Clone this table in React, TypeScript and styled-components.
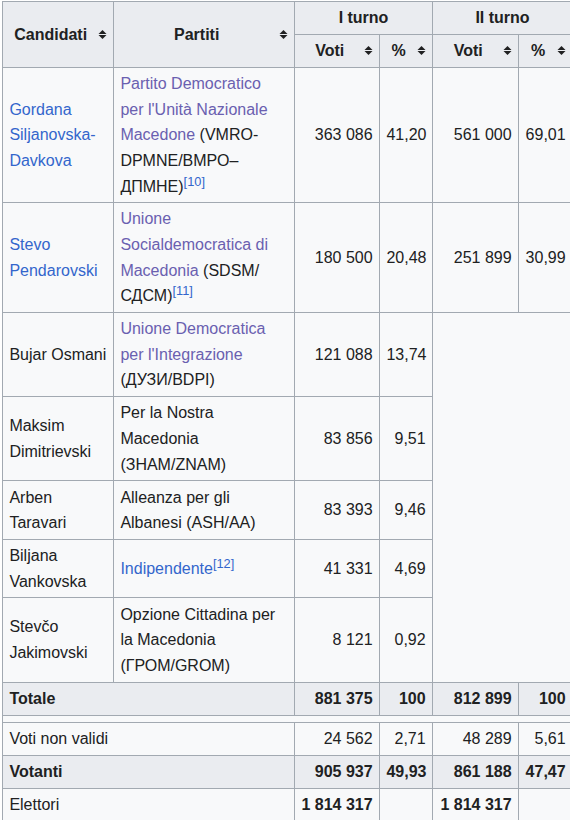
import React from "react";
import styled, { createGlobalStyle } from "styled-components";

const GlobalStyle = createGlobalStyle`
  html, body {
    margin: 0;
    padding: 0;
    overflow: hidden;
    background: #ffffff;
  }
  body {
    font-family: "Liberation Sans", Arial, sans-serif;
    font-size: 16px;
    color: #202122;
  }
`;

const Table = styled.table`
  border-collapse: collapse;
  table-layout: fixed;
  width: 570px;
  margin: 1px 0 0 2px;
  background: #f8f9fa;
  color: #202122;
  border: 1px solid #a2a9b1;
  line-height: 1.6;
  font-size: 16px;
`;

const Th = styled.th<{ $sortable?: boolean }>`
  background: #eaecf0;
  border: 1px solid #a2a9b1;
  padding: 0.2em ${(p) => (p.$sortable ? "0" : "0.4em")} 0.2em 0.4em;
  text-align: center;
  font-weight: bold;
`;

const HeadInner = styled.div`
  display: flex;
  align-items: center;
`;

const HeadText = styled.span`
  flex: 1;
  text-align: center;
`;

const Td = styled.td<{ $num?: boolean; $bold?: boolean; $head?: boolean }>`
  border: 1px solid #a2a9b1;
  padding: 0.2em 0.4em;
  text-align: ${(p) => (p.$num ? "right" : "left")};
  font-weight: ${(p) => (p.$bold || p.$head ? "bold" : "normal")};
  background: ${(p) => (p.$head ? "#eaecf0" : "transparent")};
`;

const SpacerCell = styled.td`
  border: 1px solid #a2a9b1;
  padding: 3.2px 6.4px;
  height: 0;
  line-height: 0;
  font-size: 0;
`;

const Link = styled.span<{ $visited?: boolean }>`
  color: ${(p) => (p.$visited ? "#6a60b0" : "#3366cc")};
`;

const Ref = styled.sup`
  font-size: 80%;
  line-height: 1;
  color: #3366cc;
`;

const SortSvg = styled.svg`
  flex: none;
  width: 21px;
  height: 9px;
`;

const SortIcon = () => (
  <SortSvg viewBox="0 0 21 9" aria-hidden="true">
    <path fill="#202122" d="m14.5 5-4 4-4-4zm0-1-4-4-4 4z" />
  </SortSvg>
);

const SortTh: React.FC<{ children: React.ReactNode; rowSpan?: number }> = ({ children, rowSpan }) => (
  <Th $sortable rowSpan={rowSpan}>
    <HeadInner>
      <HeadText>{children}</HeadText>
      <SortIcon />
    </HeadInner>
  </Th>
);

type Row = {
  name: React.ReactNode;
  party: React.ReactNode;
  v1: string;
  p1: string;
  v2?: string;
  p2?: string;
};

const rows: Row[] = [
  {
    name: <Link>Gordana Siljanovska-Davkova</Link>,
    party: (
      <>
        <Link $visited>Partito Democratico per l'Unità Nazionale Macedone</Link> (VMRO-DPMNE/ВМРО–ДПМНЕ)
        <Ref>[10]</Ref>
      </>
    ),
    v1: "363\u00a0086",
    p1: "41,20",
    v2: "561\u00a0000",
    p2: "69,01",
  },
  {
    name: <Link>Stevo Pendarovski</Link>,
    party: (
      <>
        <Link $visited>Unione Socialdemocratica di Macedonia</Link> (SDSM/СДСМ)
        <Ref>[11]</Ref>
      </>
    ),
    v1: "180\u00a0500",
    p1: "20,48",
    v2: "251\u00a0899",
    p2: "30,99",
  },
  {
    name: "Bujar Osmani",
    party: (
      <>
        <Link $visited>Unione Democratica per l'Integrazione</Link> (ДУЗИ/BDPI)
      </>
    ),
    v1: "121\u00a0088",
    p1: "13,74",
  },
  {
    name: "Maksim Dimitrievski",
    party: "Per la Nostra Macedonia (ЗНАМ/ZNAM)",
    v1: "83\u00a0856",
    p1: "9,51",
  },
  {
    name: "Arben Taravari",
    party: "Alleanza per gli Albanesi (ASH/AA)",
    v1: "83\u00a0393",
    p1: "9,46",
  },
  {
    name: "Biljana Vankovska",
    party: (
      <>
        <Link>Indipendente</Link>
        <Ref>[12]</Ref>
      </>
    ),
    v1: "41\u00a0331",
    p1: "4,69",
  },
  {
    name: "Stevčo Jakimovski",
    party: "Opzione Cittadina per la Macedonia (ГРОМ/GROM)",
    v1: "8\u00a0121",
    p1: "0,92",
  },
];

export default function App() {
  return (
    <>
      <GlobalStyle />
      <Table>
        <colgroup>
          <col style={{ width: 111 }} />
          <col style={{ width: 181 }} />
          <col style={{ width: 85 }} />
          <col style={{ width: 53 }} />
          <col style={{ width: 86 }} />
          <col style={{ width: 54 }} />
        </colgroup>
        <thead>
          <tr>
            <SortTh rowSpan={2}>Candidati</SortTh>
            <SortTh rowSpan={2}>Partiti</SortTh>
            <Th colSpan={2}>I turno</Th>
            <Th colSpan={2}>II turno</Th>
          </tr>
          <tr>
            <SortTh>Voti</SortTh>
            <SortTh>%</SortTh>
            <SortTh>Voti</SortTh>
            <SortTh>%</SortTh>
          </tr>
        </thead>
        <tbody>
          {rows.map((r, i) => (
            <tr key={i}>
              <Td>{r.name}</Td>
              <Td>{r.party}</Td>
              <Td $num>{r.v1}</Td>
              <Td $num>{r.p1}</Td>
              {r.v2 ? (
                <>
                  <Td $num>{r.v2}</Td>
                  <Td $num>{r.p2}</Td>
                </>
              ) : i === 2 ? (
                <Td rowSpan={5} colSpan={2} />
              ) : null}
            </tr>
          ))}
          <tr>
            <Td $head colSpan={2}>Totale</Td>
            <Td $head $num>881&nbsp;375</Td>
            <Td $head $num>100</Td>
            <Td $head $num>812&nbsp;899</Td>
            <Td $head $num>100</Td>
          </tr>
          <tr>
            <SpacerCell colSpan={6} />
          </tr>
          <tr>
            <Td colSpan={2}>Voti non validi</Td>
            <Td $num>24&nbsp;562</Td>
            <Td $num>2,71</Td>
            <Td $num>48&nbsp;289</Td>
            <Td $num>5,61</Td>
          </tr>
          <tr>
            <Td $head colSpan={2}>Votanti</Td>
            <Td $head $num>905&nbsp;937</Td>
            <Td $head $num>49,93</Td>
            <Td $head $num>861&nbsp;188</Td>
            <Td $head $num>47,47</Td>
          </tr>
          <tr>
            <Td colSpan={2}>Elettori</Td>
            <Td $num $bold>1&nbsp;814&nbsp;317</Td>
            <Td />
            <Td $num $bold>1&nbsp;814&nbsp;317</Td>
            <Td />
          </tr>
        </tbody>
      </Table>
    </>
  );
}
